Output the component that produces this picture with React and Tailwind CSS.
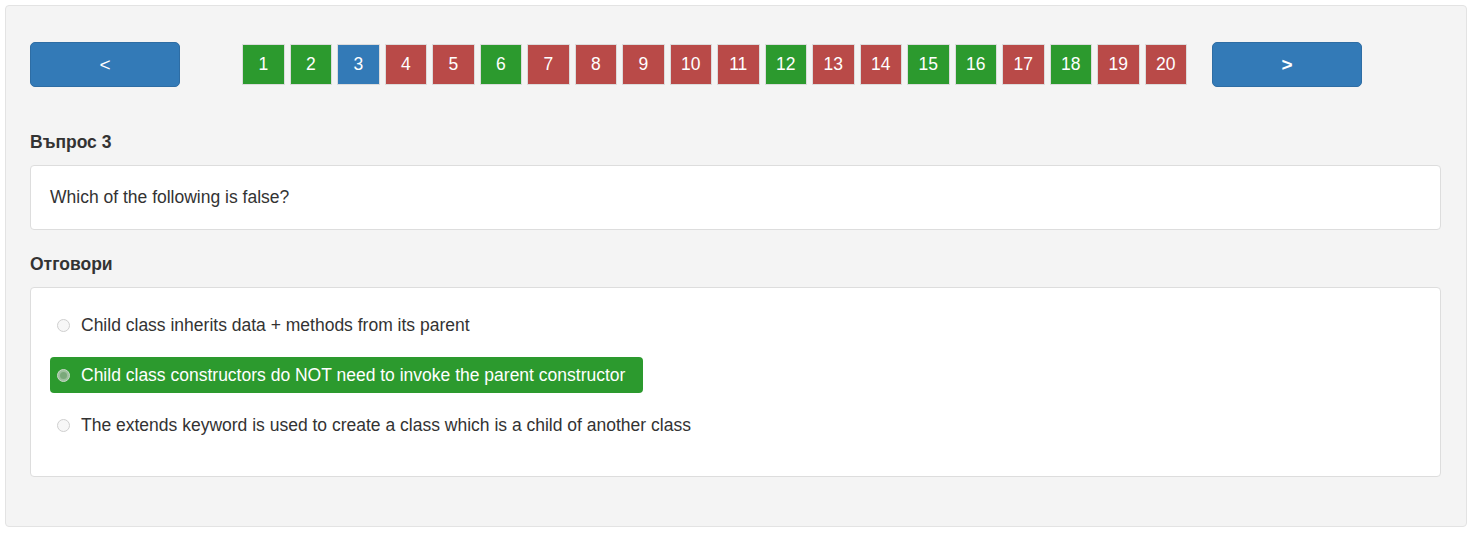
const statuses = [
  'g', 'g', 'b', 'r', 'r', 'g', 'r', 'r', 'r', 'r',
  'r', 'g', 'r', 'r', 'g', 'g', 'r', 'g', 'r', 'r',
];

const squareColor = {
  g: 'bg-[#2c9a2e]',
  r: 'bg-[#b94a48]',
  b: 'bg-[#337ab7]',
};

const answers = [
  { text: 'Child class inherits data + methods from its parent', selected: false },
  { text: 'Child class constructors do NOT need to invoke the parent constructor', selected: true },
  { text: 'The extends keyword is used to create a class which is a child of another class', selected: false },
];

function Radio({ checked }) {
  if (checked) {
    return (
      <span className="w-[13px] h-[13px] rounded-full bg-[#9fc09f] border border-[#c8d8c8] flex items-center justify-center shrink-0">
        <span className="w-[7px] h-[7px] rounded-full bg-[#7aa87a]" />
      </span>
    );
  }
  return <span className="w-[13px] h-[13px] rounded-full bg-[#f7f7f7] border border-[#cfcfcf] shrink-0" />;
}

export default function App() {
  return (
    <div className="min-h-screen bg-white p-[5px] font-['Liberation_Sans',Arial,sans-serif] text-[#333]">
      <div className="w-[1462px] bg-[#f4f4f4] border border-[#e3e3e3] rounded-[4px] pt-[36px] pb-[50px] pl-[24px] pr-[25px] h-[522px]">
        {/* pagination */}
        <div className="flex items-center">
          <button className="w-[150px] h-[45px] rounded-[5px] bg-[#337ab7] border border-[#2e6da4] text-white text-[19px] leading-none">
            &lt;
          </button>
          <div className="flex gap-[5px] ml-[62px]">
            {statuses.map((s, i) => (
              <div
                key={i}
                className={`w-[42.5px] h-[41px] border border-[#dcdcdc] ${squareColor[s]} text-white text-[17.5px] flex items-center justify-center`}
              >
                {i + 1}
              </div>
            ))}
          </div>
          <button className="ml-[25px] w-[150px] h-[45px] rounded-[5px] bg-[#337ab7] border border-[#2e6da4] text-white text-[19px] font-bold leading-none">
            &gt;
          </button>
        </div>

        <div className="mt-[45px] font-bold text-[17.5px] leading-[20px]">Въпрос 3</div>
        <div className="mt-[13px] bg-white border border-[#dddddd] rounded-[4px] h-[65px] pl-[19px] flex items-center text-[17.5px]">
          Which of the following is false?
        </div>

        <div className="mt-[24px] font-bold text-[17.5px] leading-[20px]">Отговори</div>
        <div className="mt-[13px] bg-white border border-[#dddddd] rounded-[4px] h-[190px] pt-[19px] px-[19px] flex flex-col gap-[14px]">
          {answers.map((a, i) => (
            <div key={i}>
              <div
                className={`inline-flex items-center gap-[11px] h-[36px] pl-[7px] pr-[18px] rounded-[4px] text-[17.5px] ${
                  a.selected ? 'bg-[#2c9a2e] text-white' : ''
                }`}
              >
                <Radio checked={a.selected} />
                <span>{a.text}</span>
              </div>
            </div>
          ))}
        </div>
      </div>
    </div>
  );
}
